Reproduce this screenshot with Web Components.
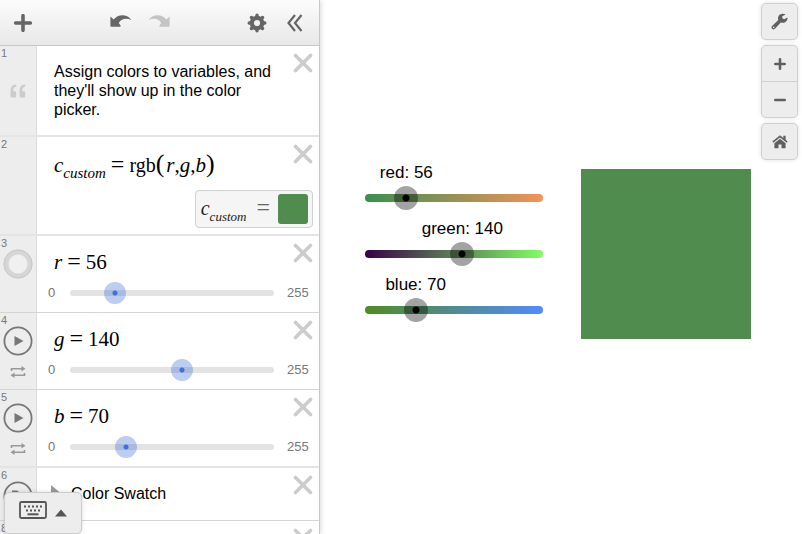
<!DOCTYPE html>
<html lang="en">
<head>
<meta charset="utf-8">
<meta name="viewport" content="width=device-width, initial-scale=1">
<title>Color Swatch</title>
<style>
  :root {
    --ui-font: "Liberation Sans", Arial, sans-serif;
    --math-font: "Liberation Serif", "Times New Roman", serif;
    --swatch: rgb(80, 140, 78);
    --icon: #666;
  }
  body {
    margin: 0;
    font-family: var(--ui-font);
    color: #000;
  }
</style>
</head>
<body>
<calc-app></calc-app>

<script>
// icons shared by all the elements
const ICONS = {
  plus: '<svg width="18" height="18" viewBox="0 0 18 18"><path d="M9 1.7v14.6M1.7 9h14.6" stroke="currentColor" stroke-width="3.6" stroke-linecap="round"/></svg>',
  undo: '<svg width="22" height="16" viewBox="0 0 22 16"><path d="M.4 1.600 3.700 4.600C8-.8 16.500-1.400 21.400 5 16 2.800 11.500 3.800 8.700 8L10.600 10.400Q11 11.700 9.800 11.800H1.200Q.4 11.800.4 11Z" fill="currentColor"/></svg>',
  redo: '<svg width="22" height="16" viewBox="0 0 22 16"><path d="M21.600 1.600 18.300 4.600C14-.8 5.500-1.400.6 5 6 2.800 10.500 3.800 13.300 8L11.400 10.400Q11 11.700 12.200 11.800H20.800Q21.600 11.800 21.600 11Z" fill="currentColor"/></svg>',
  gear: '<svg width="20" height="20" viewBox="0 0 20 20"><circle cx="10" cy="10" r="5.200" fill="none" stroke="currentColor" stroke-width="4.200"/><path d="M10 3.500V2.200M10 16.500v1.300M3.500 10H2.200M16.500 10h1.300M5.500 5.500l-1-1M14.500 5.500l1-1M5.500 14.500l-1 1M14.500 14.500l1 1" stroke="currentColor" stroke-width="3.400" stroke-linecap="round"/></svg>',
  collapse: '<svg width="16" height="18" viewBox="0 0 16 18"><path d="M8 1 1.500 9 8 17M14.500 1 8 9l6.500 8" fill="none" stroke="currentColor" stroke-width="2.200"/></svg>',
  close: '<svg width="20" height="20" viewBox="0 0 20 20"><path d="M2.500 2.500l15 15M17.500 2.500l-15 15" stroke="currentColor" stroke-width="3.600" stroke-linecap="round"/></svg>',
  quote: '<svg width="16" height="14" viewBox="0 0 16 14"><path d="M6 .5C2.500.7.500 3 .5 7V12Q.5 13.500 2 13.500H4.800Q6.200 13.500 6.200 12V8.700Q6.200 7.300 4.800 7.300H3.200C3.200 4.500 4.200 3 6.400 2.600ZM15 .5C11.500.7 9.500 3 9.500 7V12Q9.500 13.500 11 13.500H13.800Q15.200 13.500 15.200 12V8.700Q15.200 7.300 13.800 7.300H12.200C12.200 4.500 13.200 3 15.400 2.600Z" fill="currentColor"/></svg>',
  play: '<svg width="30" height="30" viewBox="0 0 30 30"><circle cx="15" cy="15" r="13.600" fill="none" stroke="currentColor" stroke-width="1.800"/><path d="M11.500 10 20.500 15 11.500 20Z" fill="currentColor"/></svg>',
  ring: '<svg width="30" height="30" viewBox="0 0 30 30"><circle cx="15" cy="15" r="12" fill="#f0f0f0" stroke="#d6d6d6" stroke-width="5"/><circle cx="15" cy="15" r="14" fill="none" stroke="#c8c8c8"/></svg>',
  folder: '<svg width="30" height="30" viewBox="0 0 30 30"><circle cx="15" cy="15" r="13.600" fill="none" stroke="currentColor" stroke-width="1.800"/><path d="M9 9.500h5l2 1.500h6v9H9z" fill="currentColor"/></svg>',
  loop: '<svg width="16" height="12" viewBox="0 0 16 12"><path d="M1.500 5V2.800H13M14.500 7V9.200H3" fill="none" stroke="currentColor" stroke-width="1.600"/><path d="M11.500 0 15.500 2.800 11.500 5.600ZM4.500 6.400.5 9.200 4.500 12Z" fill="currentColor"/></svg>',
  wrench: '<svg width="17" height="17" viewBox="0 0 17 17"><path fill="currentColor" fill-rule="evenodd" d="M14.600 1.500 11.300 3.300V5.300L13.100 6.300 16.500 4.400C16.800 7.500 14.500 9.800 11.700 9.800 11 9.800 10.400 9.700 9.800 9.400L4.200 15.600C3.300 16.600 2 16.600 1.100 15.800.3 14.900.3 13.600 1.300 12.700L7.300 7.100C6.200 3.500 8.500.7 11.800.7 12.900.7 13.900 1 14.600 1.500ZM2.700 13.500A.8.800 0 1 0 2.700 15.100.8.800 0 1 0 2.700 13.500"/></svg>',
  zoomIn: '<svg width="12" height="12" viewBox="0 0 12 12"><path d="M6 1.300v9.400M1.300 6h9.400" stroke="currentColor" stroke-width="2.600" stroke-linecap="round"/></svg>',
  zoomOut: '<svg width="12" height="12" viewBox="0 0 12 12"><path d="M1.300 6h9.400" stroke="currentColor" stroke-width="2.600" stroke-linecap="round"/></svg>',
  home: '<svg width="16" height="14" viewBox="0 0 16 14"><path d="M8 3.800 13.600 8.300V12.700Q13.600 13.300 13 13.300H9.500V9.500H6.500V13.300H3Q2.400 13.300 2.400 12.700V8.300Z" fill="currentColor"/><path d="M.8 7.200 8 1.300 15.200 7.200" fill="none" stroke="currentColor" stroke-width="1.600"/><path d="M11.300.8h2.300v4.800L11.300 3.600z" fill="currentColor"/></svg>',
  keyboard: '<svg width="28" height="18" viewBox="0 0 28 18"><rect x="1" y="1" width="26" height="16" rx="1.500" fill="none" stroke="currentColor" stroke-width="1.800"/><path d="M5 5.500h18.500" stroke="currentColor" stroke-width="2" stroke-dasharray="2 2"/><path d="M7 9.500h14.500" stroke="currentColor" stroke-width="2" stroke-dasharray="2 2"/><path d="M8.500 13.300h11" stroke="currentColor" stroke-width="2"/></svg>',
  up: '<svg width="12" height="8" viewBox="0 0 12 8"><path d="M6 .5 12 7.500H0Z" fill="currentColor"/></svg>',
  caret: '<svg width="10" height="16" viewBox="0 0 10 16"><path d="M0 0 9.500 8 0 16Z" fill="currentColor"/></svg>'
};

class IconButton extends HTMLElement {
  constructor() {
    super();
    this.attachShadow({ mode: 'open' });
  }

  connectedCallback() {
    const icon = this.getAttribute('icon');
    const label = this.getAttribute('label');
    const disabled = this.hasAttribute('disabled') ? 'disabled' : '';

    this.shadowRoot.innerHTML = `
      <style>
        :host { display: block; }
        button {
          display: flex;
          align-items: center;
          justify-content: center;
          width: 100%;
          height: 100%;
          padding: 0;
          border: 0;
          background: none;
          color: inherit;
          cursor: pointer;
        }
        svg { display: block; flex: none; }
      </style>
      <button type="button" aria-label="${label}" ${disabled}>${ICONS[icon]}</button>
    `;
  }
}
customElements.define('icon-button', IconButton);

class RangeSlider extends HTMLElement {
  constructor() {
    super();
    this.attachShadow({ mode: 'open' });
  }

  connectedCallback() {
    const value = this.getAttribute('value');
    const label = this.getAttribute('label');

    // the input sticks out of the bar so that the thumb centre reaches both ends
    this.shadowRoot.innerHTML = `
      <style>
        :host {
          display: grid;
          align-items: center;
          --size: var(--thumb-size, 22px);
          --over: calc(var(--size) / 2 - var(--bar-cap, 0px));
        }
        .bar, input { grid-area: 1 / 1; }
        .bar {
          height: var(--bar-height, 6px);
          border-radius: 4px;
          background: var(--bar, #e3e3e3);
        }
        input {
          appearance: none;
          -webkit-appearance: none;
          width: calc(100% + 2 * var(--over));
          height: var(--size);
          margin: 0 calc(-1 * var(--over));
          background: none;
          cursor: pointer;
        }
        input::-webkit-slider-thumb {
          -webkit-appearance: none;
          width: var(--size);
          height: var(--size);
          border-radius: 50%;
          background: var(--thumb, radial-gradient(circle, #3f6fd8 0 2px, rgba(45, 100, 210, .32) 3px));
        }
      </style>
      <div class="bar"></div>
      <input type="range" min="0" max="255" value="${value}" aria-label="${label}">
    `;
  }
}
customElements.define('range-slider', RangeSlider);

class ExprRow extends HTMLElement {
  constructor() {
    super();
    this.attachShadow({ mode: 'open' });
  }

  connectedCallback() {
    const number = this.getAttribute('number');

    this.shadowRoot.innerHTML = `
      <style>
        :host {
          display: grid;
          grid-template-columns: 37px 1fr;
          flex: none;
          position: relative;
          min-height: 76px;
          border-bottom: 1px solid #d4d4d4;
        }
        :host([wide-rule]) { border-bottom: 2px solid #e4e4e4; }
        .gutter {
          display: flex;
          flex-direction: column;
          align-items: center;
          background: #ededed;
          border-right: 1px solid #dcdcdc;
          color: #777;
        }
        .number {
          align-self: flex-start;
          padding: 1px 0 0 1px;
          font-size: 11px;
          line-height: 12px;
        }
        .body {
          display: flex;
          flex-direction: column;
          min-width: 0;
          padding-left: 17px;
        }
        .close {
          position: absolute;
          top: 7px;
          right: 6px;
          width: 20px;
          height: 20px;
          color: #ccc;
        }
      </style>
      <div class="gutter"><span class="number">${number}</span><slot name="gutter"></slot></div>
      <div class="body"><slot></slot></div>
      <icon-button class="close" icon="close" label="Delete row ${number}"></icon-button>
    `;
  }
}
customElements.define('expr-row', ExprRow);

class MathText extends HTMLElement {
  constructor() {
    super();
    this.attachShadow({ mode: 'open' });
    this.shadowRoot.innerHTML = `
      <style>
        :host {
          display: flex;
          align-items: baseline;
          font-family: var(--math-font);
          font-size: 21px;
          line-height: 26px;
        }
        ::slotted(i) { font-style: italic; }
        ::slotted(sub) {
          font-size: var(--sub-size, 15px);
          font-style: italic;
          line-height: 16px;
          vertical-align: baseline;
          position: relative;
          top: 6px;
        }
        ::slotted(.eq) { margin: 0 5px; font-size: 24px; }
        ::slotted(.paren) { font-size: 26px; }
      </style>
      <slot></slot>
    `;
  }
}
customElements.define('math-text', MathText);

class SliderRow extends HTMLElement {
  constructor() {
    super();
    this.attachShadow({ mode: 'open' });
  }

  connectedCallback() {
    const name = this.getAttribute('name');
    const value = this.getAttribute('value');

    this.shadowRoot.innerHTML = `
      <style>
        :host { display: block; padding-top: 12px; }
        .range {
          display: grid;
          grid-template-columns: 22px 1fr 45px;
          align-items: center;
          margin: 7px 0 0 -6px;
          font-size: 13px;
          line-height: 22px;
          color: #777;
        }
        .max { padding-left: 13px; }
      </style>
      <math-text><i>${name}</i><span class="eq">=</span><span>${value}</span></math-text>
      <div class="range">
        <span>0</span>
        <range-slider value="${value}" label="${name}"></range-slider>
        <span class="max">255</span>
      </div>
    `;
  }
}
customElements.define('slider-row', SliderRow);

class ExpressionPanel extends HTMLElement {
  constructor() {
    super();
    this.attachShadow({ mode: 'open' });
  }

  connectedCallback() {
    this.shadowRoot.innerHTML = `
      <style>
        :host {
          display: flex;
          flex-direction: column;
          overflow: hidden;
          background: #fff;
        }
        header {
          display: flex;
          flex: none;
          align-items: center;
          height: 46px;
          padding: 0 14px 0 13px;
          border-bottom: 1px solid #c8c8c8;
          background: linear-gradient(#fcfcfc, #e8e8e8);
          color: var(--icon);
          box-sizing: border-box;
        }
        header icon-button { height: 20px; width: 20px; }
        header .undo { width: 22px; margin-left: auto; }
        header .redo { width: 22px; margin: 0 auto 0 16px; color: #c4c4c4; }
        header .collapse { margin-left: 18px; }
        .list {
          display: flex;
          flex-direction: column;
          flex: 1;
          min-height: 0;
          overflow: hidden;
        }
        .note {
          margin: 16px 44px 16px 0;
          font-size: 16px;
          line-height: 19px;
        }
        .quote { display: block; margin-top: 25px; color: #ccc; }
        .round { width: 30px; height: 30px; color: #777; }
        .loop { width: 20px; height: 16px; margin-top: 8px; color: #999; }
        .formula { margin-top: 14px; }
        .formula .fn { font-size: 20px; }
        .formula .open { margin-right: 2px; }
        .result {
          display: flex;
          align-items: center;
          align-self: flex-end;
          margin: 12px 6px 6px 0;
          padding: 3px 4px 3px 5px;
          border: 1px solid #d0d0d0;
          border-radius: 4px;
          background: #f5f5f5;
        }
        .result math-text { --sub-size: 13px; margin-top: -4px; font-size: 20px; color: #222; }
        .result .eq { margin: 0 8px 0 10px; color: #666; }
        .swatch {
          width: 30px;
          height: 30px;
          border-radius: 3px;
          background: var(--swatch);
        }
        .folder {
          display: flex;
          align-items: center;
          gap: 10px;
          padding: 16px 0;
          margin-left: -3px;
          font-size: 16px;
          line-height: 20px;
        }
        .folder icon-button { width: 10px; height: 16px; margin-top: -2px; color: #999; }
      </style>
      <header>
        <icon-button icon="plus" label="Add item"></icon-button>
        <icon-button class="undo" icon="undo" label="Undo"></icon-button>
        <icon-button class="redo" icon="redo" label="Redo" disabled></icon-button>
        <icon-button icon="gear" label="Edit list"></icon-button>
        <icon-button class="collapse" icon="collapse" label="Hide list"></icon-button>
      </header>
      <div class="list">
        <expr-row number="1" wide-rule>
          <span slot="gutter" class="quote">${ICONS.quote}</span>
          <p class="note">Assign colors to variables, and they'll show up in the color picker.</p>
        </expr-row>
        <expr-row number="2" wide-rule>
          <math-text class="formula"><i>c</i><sub>custom</sub><span class="eq">=</span><span class="fn">rgb</span><span class="paren open">(</span><i>r</i><span>,</span><i>g</i><span>,</span><i>b</i><span class="paren">)</span></math-text>
          <div class="result">
            <math-text><i>c</i><sub>custom</sub><span class="eq">=</span></math-text>
            <div class="swatch"></div>
          </div>
        </expr-row>
        <expr-row number="3">
          <icon-button slot="gutter" class="round" icon="ring" label="Show r"></icon-button>
          <slider-row name="r" value="56"></slider-row>
        </expr-row>
        <expr-row number="4">
          <icon-button slot="gutter" class="round" icon="play" label="Play g"></icon-button>
          <icon-button slot="gutter" class="loop" icon="loop" label="Loop mode of g"></icon-button>
          <slider-row name="g" value="140"></slider-row>
        </expr-row>
        <expr-row number="5" wide-rule>
          <icon-button slot="gutter" class="round" icon="play" label="Play b"></icon-button>
          <icon-button slot="gutter" class="loop" icon="loop" label="Loop mode of b"></icon-button>
          <slider-row name="b" value="70"></slider-row>
        </expr-row>
        <expr-row number="6" style="min-height: 52px">
          <icon-button slot="gutter" class="round" icon="folder" label="Hide folder"></icon-button>
          <div class="folder"><icon-button icon="caret" label="Open folder"></icon-button>Color Swatch</div>
        </expr-row>
        <expr-row number="8"></expr-row>
      </div>
    `;
  }
}
customElements.define('expression-panel', ExpressionPanel);

class GraphSlider extends HTMLElement {
  constructor() {
    super();
    this.attachShadow({ mode: 'open' });
  }

  connectedCallback() {
    const name = this.getAttribute('name');
    const value = this.getAttribute('value');

    this.shadowRoot.innerHTML = `
      <style>
        :host {
          display: block;
          --thumb-size: 24px;
          --bar-height: 8px;
          --bar-cap: 4px;
          --thumb: radial-gradient(circle, #000 0 3px, rgba(0, 0, 0, .36) 4px);
        }
        .caption {
          width: max-content;
          margin-left: calc(4px + (100% - 8px) * ${value} / 255);
          transform: translateX(-50%);
          font-size: 17px;
          line-height: 20px;
        }
        range-slider { margin-top: 3px; }
      </style>
      <div class="caption">${name}: ${value}</div>
      <range-slider value="${value}" label="${name}"></range-slider>
    `;
  }
}
customElements.define('graph-slider', GraphSlider);

class GraphPaper extends HTMLElement {
  constructor() {
    super();
    this.attachShadow({ mode: 'open' });
    this.shadowRoot.innerHTML = `
      <style>
        :host {
          display: flex;
          gap: 38px;
          position: relative;
          padding: 163px 51px 0 45px;
          background: #fff;
          box-sizing: border-box;
        }
        .sliders {
          display: flex;
          flex-direction: column;
          flex: 178;
          gap: 9px;
        }
        .square {
          flex: 170;
          align-self: flex-start;
          aspect-ratio: 1;
          margin-top: 6px;
          background: var(--swatch);
        }
        .red { --bar: linear-gradient(90deg, #38904f, #f59258); }
        .green { --bar: linear-gradient(90deg, #380048, #80ff64); }
        .blue { --bar: linear-gradient(90deg, #508c20, #508cff); }
        /* buttons float over the graph */
        nav {
          display: flex;
          flex-direction: column;
          gap: 5px;
          position: absolute;
          top: 3px;
          right: 4px;
        }
        .group {
          width: 35px;
          border: 1px solid #d0d0d0;
          border-radius: 5px;
          background: #ededed;
          box-shadow: 0 0 4px rgba(0, 0, 0, .12);
          color: #606060;
        }
        .group icon-button { height: 35px; }
        .group icon-button + icon-button { border-top: 1px solid #d0d0d0; }
      </style>
      <div class="sliders">
        <graph-slider class="red" name="red" value="56"></graph-slider>
        <graph-slider class="green" name="green" value="140"></graph-slider>
        <graph-slider class="blue" name="blue" value="70"></graph-slider>
      </div>
      <div class="square"></div>
      <nav>
        <div class="group"><icon-button icon="wrench" label="Graph settings"></icon-button></div>
        <div class="group">
          <icon-button icon="zoomIn" label="Zoom in"></icon-button>
          <icon-button icon="zoomOut" label="Zoom out"></icon-button>
        </div>
        <div class="group"><icon-button icon="home" label="Default view"></icon-button></div>
      </nav>
    `;
  }
}
customElements.define('graph-paper', GraphPaper);

class CalcApp extends HTMLElement {
  constructor() {
    super();
    this.attachShadow({ mode: 'open' });
    this.shadowRoot.innerHTML = `
      <style>
        :host {
          display: grid;
          grid-template-columns: 320px 1fr;
          position: relative;
          height: 100vh;
          overflow: hidden;
        }
        expression-panel {
          z-index: 1;
          min-height: 0;
          border-right: 1px solid #c8c8c8;
          box-shadow: 0 0 6px rgba(0, 0, 0, .2);
        }
        .keypad {
          display: flex;
          align-items: center;
          gap: 8px;
          position: absolute;
          z-index: 2;
          left: 4px;
          bottom: 0;
          height: 42px;
          padding: 0 14px 6px;
          border: 1px solid #ccc;
          border-radius: 5px;
          background: #ededed;
          box-shadow: 0 0 4px rgba(0, 0, 0, .15);
          box-sizing: border-box;
          color: #555;
        }
        .keypad svg { display: block; }
        .keypad svg + svg { margin-top: 5px; }
      </style>
      <expression-panel></expression-panel>
      <graph-paper></graph-paper>
      <button class="keypad" type="button" aria-label="Show keypad">${ICONS.keyboard}${ICONS.up}</button>
    `;
  }
}
customElements.define('calc-app', CalcApp);
</script>
</body>
</html>
